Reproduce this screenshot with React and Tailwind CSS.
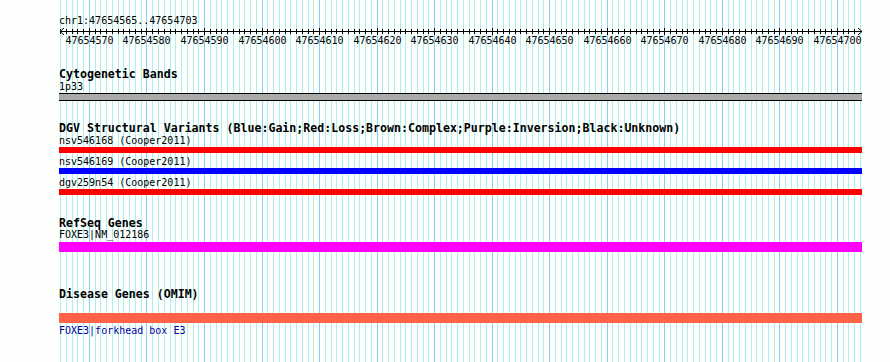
const START = 47654565;
const END = 47654703;
const X0 = 60.2;
const STEP = 5.753;
const OFF = 59;

// one grid line per base, through END + 1
const LINES = Array.from({ length: END - START + 2 }, (_, k) => ({
  pos: START + k,
  x: Math.round(X0 + STEP * k),
}));

function Grid() {
  return (
    <svg className="absolute inset-0 pointer-events-none" width="890" height="362">
      {LINES.map((l) => (
        <rect
          key={l.pos}
          x={l.x}
          y={0}
          width={1}
          height={362}
          fill={l.pos % 10 === 0 ? '#87cefa' : '#afeeee'}
        />
      ))}
    </svg>
  );
}

function Ruler() {
  const right = 862 - OFF;
  return (
    <svg width={890 - OFF} height="20" className="block">
      <line x1={1} y1={5.5} x2={right} y2={5.5} stroke="#000" strokeWidth="1" />
      <polyline points={`${5},2 ${1},5.5 ${5},9`} fill="none" stroke="#000" strokeWidth="1" />
      <polyline points={`${right - 4},2 ${right},5.5 ${right - 4},9`} fill="none" stroke="#000" strokeWidth="1" />
      {LINES.filter((l) => l.pos <= END).map((l) => {
        const major = l.pos % 10 === 0;
        return (
          <rect
            key={l.pos}
            x={l.x - OFF}
            y={major ? 2 : 3}
            width={1}
            height={major ? 7 : 5}
            fill="#000"
          />
        );
      })}
      {LINES.filter((l) => l.pos % 10 === 0 && l.pos <= END).map((l) => (
        <text
          key={l.pos}
          x={l.x - OFF + 0.5}
          y={17.5}
          textAnchor="middle"
          fontSize="10"
          fontFamily="DejaVu Sans Mono, monospace"
          fill="#000"
        >
          {l.pos}
        </text>
      ))}
    </svg>
  );
}

function Header({ children, className = '' }) {
  return <div className={`font-bold text-[11.6px] leading-[12px] text-black ${className}`}>{children}</div>;
}

function Label({ children, className = '' }) {
  return <div className={`text-[10px] leading-[10px] whitespace-pre ${className}`}>{children}</div>;
}

const variants = [
  { id: 'nsv546168 (Cooper2011)', color: 'bg-[#ff0000]' },
  { id: 'nsv546169 (Cooper2011)', color: 'bg-[#0000ff]' },
  { id: 'dgv259n54 (Cooper2011)', color: 'bg-[#ff0000]' },
];

export default function App() {
  return (
    <div className="relative w-[890px] h-[362px] overflow-hidden bg-[#fdfffd] font-['DejaVu_Sans_Mono',monospace]">
      <Grid />
      <div className="relative flex flex-col pl-[59px] pt-[16px]">
        <Label className="text-black">chr1:47654565..47654703</Label>
        <Ruler />

        <Header className="mt-[22px]">Cytogenetic Bands</Header>
        <Label className="mt-[2px] text-black">1p33</Label>
        <div className="mt-[1px] w-[803px] h-[8px] bg-[#aaaaaa] border-y border-black" />

        <Header className="mt-[21px]">
          DGV Structural Variants (Blue:Gain;Red:Loss;Brown:Complex;Purple:Inversion;Black:Unknown)
        </Header>
        <div className="flex flex-col gap-[4px] mt-[2px]">
          {variants.map((v) => (
            <div key={v.id} className="flex flex-col gap-[1px]">
              <Label className="text-black">{v.id}</Label>
              <div className={`w-[803px] h-[6px] ${v.color}`} />
            </div>
          ))}
        </div>

        <Header className="mt-[22px]">RefSeq Genes</Header>
        <Label className="mt-[1px] text-black">FOXE3|NM_012186</Label>
        <div className="mt-[2px] w-[803px] h-[10px] bg-[#ff00ff]" />

        <Header className="mt-[36px]">Disease Genes (OMIM)</Header>
        <div className="mt-[13px] w-[803px] h-[10px] bg-[#ff6347]" />
        <Label className="mt-[3px] text-[#0000a0]">FOXE3|forkhead box E3</Label>
      </div>
    </div>
  );
}
